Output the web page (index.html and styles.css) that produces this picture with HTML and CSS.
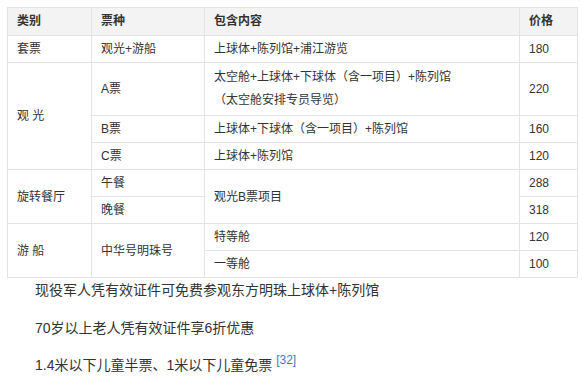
FILE: index.html
```html
<!DOCTYPE html>
<html lang="zh-CN">
<head>
<meta charset="utf-8">
<link rel="stylesheet" href="styles.css">
</head>
<body>
<table class="price-table">
  <colgroup>
    <col class="c1"><col class="c2"><col class="c3"><col class="c4">
  </colgroup>
  <thead>
    <tr><th>类别</th><th>票种</th><th>包含内容</th><th>价格</th></tr>
  </thead>
  <tbody>
    <tr><td>套票</td><td>观光+游船</td><td>上球体+陈列馆+浦江游览</td><td>180</td></tr>
    <tr><td rowspan="3">观 光</td><td>A票</td><td class="multi">太空舱+上球体+下球体（含一项目）+陈列馆<br>（太空舱安排专员导览）</td><td>220</td></tr>
    <tr><td>B票</td><td>上球体+下球体（含一项目）+陈列馆</td><td>160</td></tr>
    <tr><td>C票</td><td>上球体+陈列馆</td><td>120</td></tr>
    <tr><td rowspan="2">旋转餐厅</td><td>午餐</td><td rowspan="2">观光B票项目</td><td>288</td></tr>
    <tr><td>晚餐</td><td>318</td></tr>
    <tr><td rowspan="2">游 船</td><td rowspan="2">中华号明珠号</td><td>特等舱</td><td>120</td></tr>
    <tr><td>一等舱</td><td>100</td></tr>
  </tbody>
</table>
<p class="note">现役军人凭有效证件可免费参观东方明珠上球体+陈列馆</p>
<p class="note">70岁以上老人凭有效证件享6折优惠</p>
<p class="note">1.4米以下儿童半票、1米以下儿童免票 <sup class="ref">[32]</sup></p>
</body>
</html>
```
FILE: styles.css
```css
html, body {
  margin: 0;
  background: #ffffff;
}
body {
  padding: 7px;
  font-family: "Liberation Sans", "Noto Sans CJK SC", sans-serif;
  color: #333333;
}
.price-table {
  border-collapse: collapse;
  table-layout: fixed;
  width: 570px;
  font-size: 12px;
}
.c1 { width: 84px; }
.c2 { width: 113px; }
.c3 { width: 315px; }
.c4 { width: 58px; }
.price-table th,
.price-table td {
  border: 1px solid #e3e3e3;
  padding: 0 9px;
  text-align: left;
  vertical-align: middle;
  height: 26px;
  line-height: 26px;
  white-space: nowrap;
}
.price-table th {
  background: #f3f3f3;
  font-weight: bold;
  height: 27px;
  line-height: 27px;
  color: #333333;
}
.price-table td.multi {
  line-height: 23px;
  padding-top: 3px;
  padding-bottom: 3px;
}
.note {
  margin: 0 0 12.5px 0;
  font-size: 14px;
  line-height: 25px;
  text-indent: 28px;
}
.ref {
  color: #3b7bc8;
  font-size: 12px;
  vertical-align: 6px;
  line-height: 0;
}
```
